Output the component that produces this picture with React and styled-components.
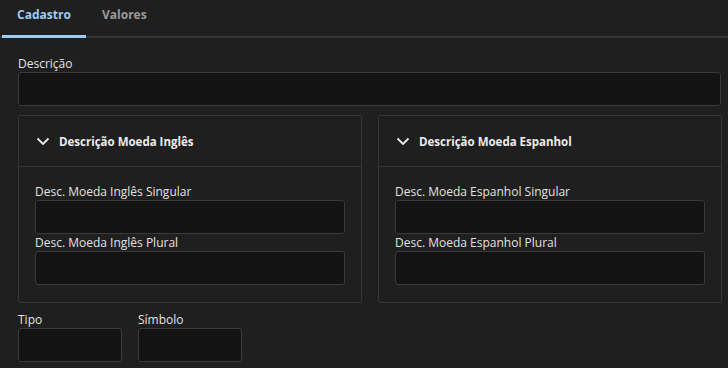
import React from "react"
import styled, { createGlobalStyle } from "styled-components"

const GlobalStyle = createGlobalStyle`
    html, body {
        margin: 0;
        padding: 0;
        background: #1f1f1f;
    }
    body {
        font-family: "Open Sans", "Noto Sans", sans-serif;
        color: #e6e6e6;
    }
`

const Page = styled.div`
    width: 728px;
    height: 368px;
    overflow: hidden;
    background: #1f1f1f;
`

const TabBar = styled.div`
    display: flex;
    height: 36px;
    border-bottom: 2px solid #353535;
    padding-left: 2px;
`

const Tab = styled.div`
    width: 84px;
    display: flex;
    align-items: center;
    justify-content: ${p => (p.$active ? "center" : "flex-start")};
    padding-left: ${p => (p.$active ? "0" : "16px")};
    padding-bottom: 6px;
    box-sizing: border-box;
    font-size: 12px;
    font-weight: 700;
    color: ${p => (p.$active ? "#9fcbf0" : "#9a9a9a")};
    border-bottom: 3px solid ${p => (p.$active ? "#9fcbf0" : "transparent")};
    margin-bottom: -2px;
`

const Content = styled.div`
    padding: 17px 7px 0 18px;
    display: flex;
    flex-direction: column;
`

const Field = styled.div`
    display: flex;
    flex-direction: column;
    width: ${p => p.$width || "auto"};
`

const Label = styled.label`
    font-size: 12px;
    line-height: 17px;
    color: #e2e2e2;
`

const Input = styled.div`
    height: 32px;
    background: #131313;
    border: 1px solid #3a3a3a;
    border-radius: 3px;
`

const Panels = styled.div`
    display: grid;
    grid-template-columns: 344px 344px;
    gap: 16px;
    margin-top: 9px;
`

const Panel = styled.div`
    border: 1px solid #353535;
    border-radius: 2px;
    height: 188px;
    box-sizing: border-box;
`

const PanelHeader = styled.div`
    height: 50px;
    border-bottom: 1px solid #353535;
    display: flex;
    align-items: center;
    padding-left: 17px;
    gap: 9px;
    font-size: 11.5px;
    font-weight: 700;
    color: #ececec;
`

const PanelBody = styled.div`
    padding: 16px 16px 0 16px;
    display: flex;
    flex-direction: column;
`

const BottomRow = styled.div`
    display: flex;
    gap: 16px;
    margin-top: 8px;
`

const Chevron = () => (
    <svg width="14" height="9" viewBox="0 0 14 9">
        <path d="M1.5 1.5 L7 7 L12.5 1.5" fill="none" stroke="#ececec" strokeWidth="1.8" />
    </svg>
)

const CurrencyPanel = ({ lang }) => (
    <Panel>
        <PanelHeader>
            <Chevron />
            Descrição Moeda {lang}
        </PanelHeader>
        <PanelBody>
            <Field>
                <Label>Desc. Moeda {lang} Singular</Label>
                <Input />
            </Field>
            <Field>
                <Label>Desc. Moeda {lang} Plural</Label>
                <Input />
            </Field>
        </PanelBody>
    </Panel>
)

export default function App() {
    return (
        <Page>
            <GlobalStyle />
            <TabBar>
                <Tab $active>Cadastro</Tab>
                <Tab>Valores</Tab>
            </TabBar>
            <Content>
                <Field>
                    <Label>Descrição</Label>
                    <Input />
                </Field>
                <Panels>
                    <CurrencyPanel lang="Inglês" />
                    <CurrencyPanel lang="Espanhol" />
                </Panels>
                <BottomRow>
                    <Field $width="104px">
                        <Label>Tipo</Label>
                        <Input />
                    </Field>
                    <Field $width="104px">
                        <Label>Símbolo</Label>
                        <Input />
                    </Field>
                </BottomRow>
            </Content>
        </Page>
    )
}
